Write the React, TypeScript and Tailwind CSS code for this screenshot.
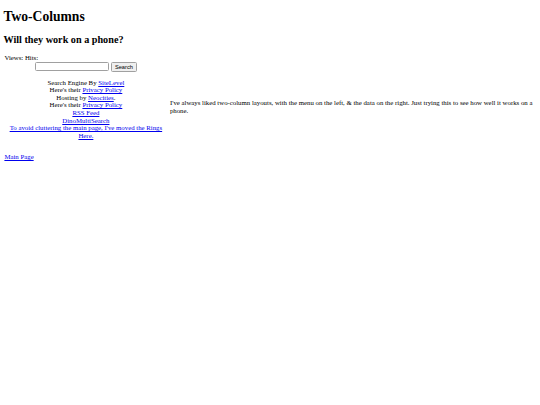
export default function App() {
  const link = "text-[#0000ee] underline";
  return (
    <div className="min-h-screen bg-white px-[3.4px] pt-[9px] font-['Liberation_Serif',serif] text-[6.8px] leading-[7.8px] text-black">
      <h1 className="text-[13.6px] font-bold leading-[15.6px]">Two-Columns</h1>
      <h2 className="mt-[9px] text-[10.2px] font-bold leading-[11.7px]">Will they work on a phone?</h2>

      <div className="mt-[8.5px] flex items-stretch gap-[1.5px]">
        <div className="w-[165px] shrink-0 pb-[7px]">
          <div className="pl-[1px]">Views: Hits:</div>
          <div className="flex items-center justify-center gap-[2px]">
            <input type="text" className="h-[9px] w-[74px] rounded-[1.5px] border border-[#a0a0a0] bg-white" />
            <button className="h-[10px] rounded-[1.5px] border border-[#a0a0a0] bg-[#efefef] px-[3px] font-['Liberation_Sans',sans-serif] text-[5.7px] leading-[8px]">
              Search
            </button>
          </div>
          <div className="mt-[7px] text-center leading-[7.6px]">
            <div>
              Search Engine By <a className={link}>SiteLevel</a>
            </div>
            <div>
              Here's their <a className={link}>Privacy Policy</a>
            </div>
            <div>
              Hosting by <a className={link}>Neocities</a>.
            </div>
            <div>
              Here's their <a className={link}>Privacy Policy</a>
            </div>
            <div>
              <a className={link}>RSS Feed</a>
            </div>
            <div>
              <a className={link}>DinoMultiSearch</a>
            </div>
            <div>
              <a className={link}>To avoid cluttering the main page, I've moved the Rings Here.</a>
            </div>
          </div>
        </div>
        <div className="flex flex-1 items-center pt-[13px]">
          <p>
            I've always liked two-column layouts, with the menu on the left, &amp; the data on the right. Just trying
            this to see how well it works on a phone.
          </p>
        </div>
      </div>

      <div className="mt-[7px] pl-[1px]">
        <a className={link}>Main Page</a>
      </div>
    </div>
  );
}
